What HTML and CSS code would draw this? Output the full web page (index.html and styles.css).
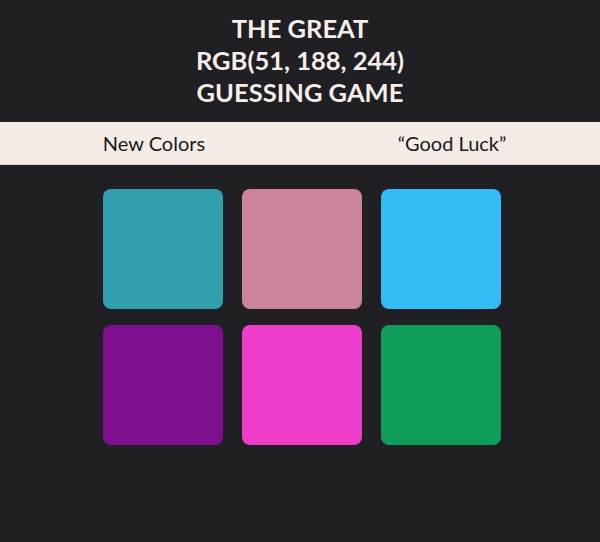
FILE: index.html
```html
<!DOCTYPE html>
<html>
<head>
<meta charset="utf-8">
<link rel="stylesheet" href="styles.css">
</head>
<body>
<h1 class="title">THE GREAT<br><span class="rgb">RGB(51, 188, 244)</span><br>GUESSING GAME</h1>
<div class="bar">
  <span class="btn">New Colors</span>
  <span class="msg">“Good Luck”</span>
</div>
<div class="grid">
  <div class="sq" style="background:#31a0ad"></div>
  <div class="sq" style="background:#cb839e"></div>
  <div class="sq" style="background:#33bcf4"></div>
  <div class="sq" style="background:#7e0f8e"></div>
  <div class="sq" style="background:#ee3ccb"></div>
  <div class="sq" style="background:#0f9e5a"></div>
</div>
</body>
</html>
```
FILE: styles.css
```css
html, body { margin: 0; padding: 0; }
body {
  background: #1f1f24;
  height: 542px;
  font-family: Lato, "Open Sans", sans-serif;
}
.title {
  margin: 0;
  padding-top: 12px;
  text-align: center;
  color: #f6eeea;
  font-size: 25.5px;
  font-weight: 700;
  line-height: 32px;
}
.bar {
  margin-top: 14px;
  height: 42px;
  background: #f5ebe7;
  border-bottom: 1px solid #d8cfcc;
  display: grid;
  grid-template-columns: 1fr 1fr;
  align-items: center;
  font-family: Lato, sans-serif;
  font-size: 20px;
  color: #1a1a1a;
}
.btn { justify-self: center; margin-left: 8px; }
.msg { justify-self: center; margin-left: 4px; }
.grid {
  margin: 24px 0 0 103px;
  width: 398px;
  display: grid;
  grid-template-columns: repeat(3, 120px);
  column-gap: 19px;
  row-gap: 16px;
}
.sq {
  height: 120px;
  border-radius: 8px;
}
```
